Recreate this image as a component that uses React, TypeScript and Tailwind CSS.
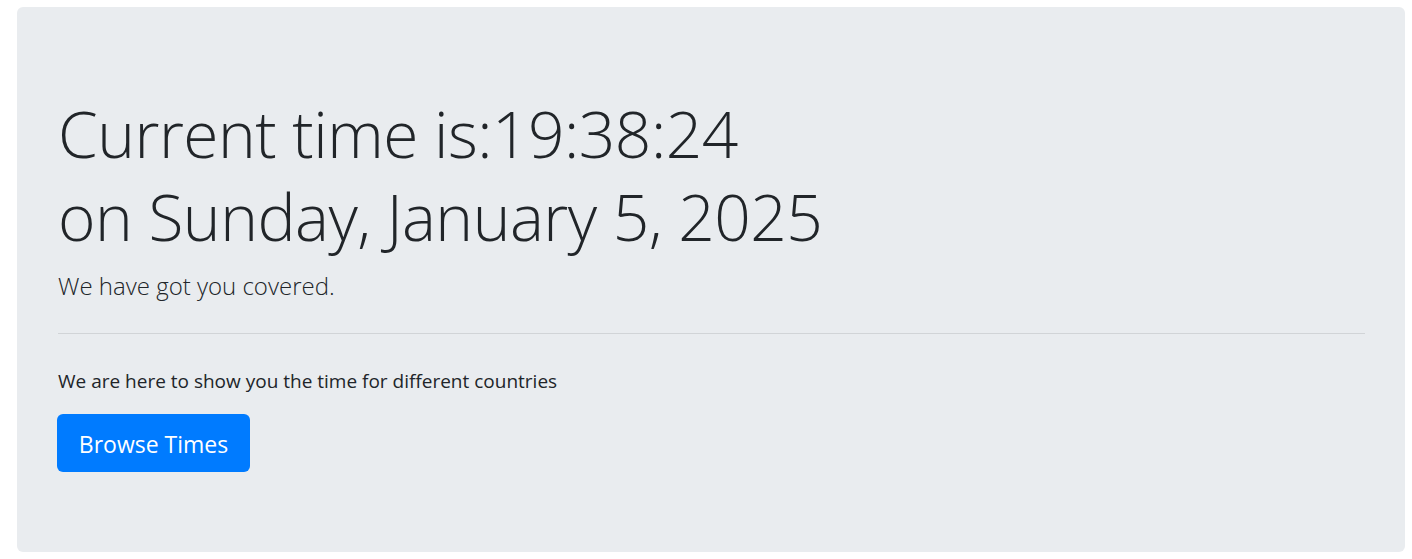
import React from 'react';

export default function App() {
  return (
    <div className="pt-[7px] pb-[7px] pl-[17px] pr-[7px] bg-white" style={{ fontFamily: '"Open Sans", "Noto Sans", sans-serif' }}>
      <div className="bg-[#e9ecef] rounded-[6px] h-[545px] pt-[85px] pl-[41px] pr-[40px] text-[#212529]">
        <h1 className="text-[64px] font-light leading-[83px] tracking-[-0.5px]">
          Current time is:19:38:24
          <br />
          on Sunday, January 5, 2025
        </h1>
        <p className="text-[24px] font-light leading-[29px] mt-[13px]">We have got you covered.</p>
        <hr className="border-0 border-t border-[#d1d4d7] mt-[33px] mb-[33px]" />
        <p className="text-[19px] leading-[29px]">We are here to show you the time for different countries</p>
        <button className="mt-[18px] -ml-px pt-[3px] bg-[#007bff] text-white rounded-[6px] h-[58px] w-[193px] text-[23px] leading-[29px]">
          Browse Times
        </button>
      </div>
    </div>
  );
}
